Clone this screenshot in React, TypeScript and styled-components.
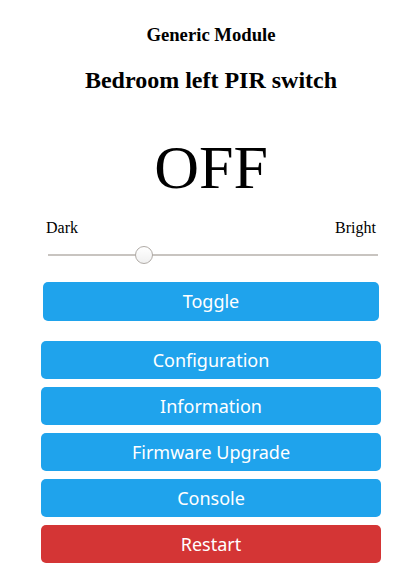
import React, { useState } from 'react'
import styled, { createGlobalStyle } from 'styled-components'

const GlobalStyle = createGlobalStyle`
  html, body {
    margin: 0;
    padding: 0;
    background: #ffffff;
  }
`

const Page = styled.div`
  box-sizing: border-box;
  width: 410px;
  padding-left: 12px;
  display: flex;
  flex-direction: column;
  align-items: center;
  font-family: 'Liberation Serif', 'Times New Roman', serif;
  color: #000;
`

const ModuleName = styled.h3`
  margin: 24px 0 0 0;
  font-size: 18.7px;
  font-weight: bold;
  line-height: 22px;
`

const DeviceName = styled.h2`
  margin: 20px 0 0 0;
  font-size: 24px;
  font-weight: bold;
  line-height: 28px;
`

const State = styled.div`
  margin-top: 36px;
  font-size: 62px;
  line-height: 74px;
`

const SliderLabels = styled.div`
  width: 330px;
  margin-top: 14px;
  display: flex;
  justify-content: space-between;
  font-size: 16px;
  line-height: 20px;
`

const SliderWrap = styled.div`
  width: 330px;
  height: 20px;
  margin-top: 7px;
  margin-left: 4px;
  position: relative;
`

const Track = styled.div`
  position: absolute;
  left: 0;
  right: 0;
  top: 9px;
  height: 2px;
  background: #c8c4c0;
`

const Thumb = styled.div`
  position: absolute;
  top: 1px;
  width: 16px;
  height: 16px;
  margin-left: -9px;
  border-radius: 50%;
  border: 1px solid #b0aba6;
  background: linear-gradient(#ffffff, #f0f0f0);
`

const ButtonStack = styled.div`
  width: 340px;
  display: flex;
  flex-direction: column;
  gap: 8px;
  margin-top: 17px;
`

const Button = styled.button<{ $danger?: boolean; $inset?: boolean }>`
  border: 0;
  border-radius: 5px;
  background: ${({ $danger }) => ($danger ? '#d43535' : '#1fa3ec')};
  color: #fff;
  font-family: 'Noto Sans', 'Open Sans', sans-serif;
  font-size: 18px;
  height: ${({ $inset }) => ($inset ? '39px' : '38px')};
  line-height: ${({ $inset }) => ($inset ? '39px' : '38px')};
  padding: 0;
  width: ${({ $inset }) => ($inset ? '336px' : '340px')};
  align-self: center;
  cursor: pointer;
`

const Spacer = styled.div`
  height: 4px;
`

export default function App() {
  const [on, setOn] = useState(false)
  const level = 29
  return (
    <Page>
      <GlobalStyle />
      <ModuleName>Generic Module</ModuleName>
      <DeviceName>Bedroom left PIR switch</DeviceName>
      <State>{on ? 'ON' : 'OFF'}</State>
      <SliderLabels>
        <span>Dark</span>
        <span>Bright</span>
      </SliderLabels>
      <SliderWrap>
        <Track />
        <Thumb style={{ left: `${level}%` }} />
      </SliderWrap>
      <ButtonStack>
        <Button $inset onClick={() => setOn(!on)}>Toggle</Button>
        <Spacer />
        <Button>Configuration</Button>
        <Button>Information</Button>
        <Button>Firmware Upgrade</Button>
        <Button>Console</Button>
        <Button $danger>Restart</Button>
      </ButtonStack>
    </Page>
  )
}
